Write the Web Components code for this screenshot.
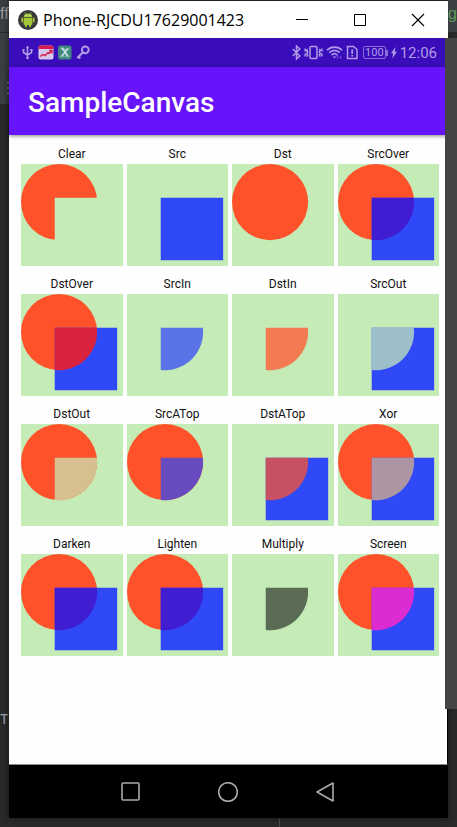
<!DOCTYPE html>
<html lang="en">
<head>
<meta charset="utf-8">
<meta name="viewport" content="width=device-width, initial-scale=1">
<title>Phone-RJCDU17629001423</title>
<style>
html, body { margin: 0; height: 100%; }
body { background: #2b2b2b; font-family: Roboto, "Liberation Sans", sans-serif; overflow: hidden; }
</style>
</head>
<body>
<desktop-view>
  <phone-window>
    <title-bar>Phone-RJCDU17629001423</title-bar>
    <status-bar time="12:06" battery="100"></status-bar>
    <app-bar>SampleCanvas</app-bar>
    <mode-grid>
      <mode-tile kind="Clear"></mode-tile>
      <mode-tile kind="Src"></mode-tile>
      <mode-tile kind="Dst"></mode-tile>
      <mode-tile kind="SrcOver"></mode-tile>
      <mode-tile kind="DstOver"></mode-tile>
      <mode-tile kind="SrcIn"></mode-tile>
      <mode-tile kind="DstIn"></mode-tile>
      <mode-tile kind="SrcOut"></mode-tile>
      <mode-tile kind="DstOut"></mode-tile>
      <mode-tile kind="SrcATop"></mode-tile>
      <mode-tile kind="DstATop"></mode-tile>
      <mode-tile kind="Xor"></mode-tile>
      <mode-tile kind="Darken"></mode-tile>
      <mode-tile kind="Lighten"></mode-tile>
      <mode-tile kind="Multiply"></mode-tile>
      <mode-tile kind="Screen"></mode-tile>
    </mode-grid>
    <nav-bar></nav-bar>
  </phone-window>
</desktop-view>
<script>
function define(name, css, html) {
  customElements.define(name, class extends HTMLElement {
    constructor() {
      super();
      this.attachShadow({ mode: 'open' });
      const body = typeof html === 'function' ? html(this) : html;
      this.shadowRoot.innerHTML = `<style>${css}</style>${body}`;
    }
  });
}

define('desktop-view', `
  :host { display: grid; grid-template-columns: 9px 1fr 9px; min-height: 100vh; box-sizing: border-box; position: relative; background: #2a2a2a; }
  .edge { display: flex; flex-direction: column; overflow: hidden; white-space: nowrap; }
  .head { height: 33px; box-sizing: border-box; padding-top: 4px; background: #3c3f41; border-bottom: 1px solid #2a2a2a; font: 16px/20px "Liberation Sans", sans-serif; }
  .tabs { height: 71px; box-sizing: border-box; padding-top: 48px; background: #3c3f41; }
  .tabs svg { display: block; margin-left: auto; }
  .gutter { flex: 1; }
  .foot { height: 116px; color: #9aa3b4; font: 14px/18px "Liberation Mono", monospace; }
  .left .head { color: #9a9da0; }
  .right .head { color: #5a9a58; display: flex; justify-content: flex-end; }
  .main { padding: 1px 0 9px; display: flex; flex-direction: column; min-width: 0; }
  .panel { position: absolute; right: 0; top: 38px; bottom: 118px; width: 12px; background: #444; }
  .divider { position: absolute; left: 279px; bottom: 0; height: 8px; width: 1px; background: #484848; }
`, `
  <div class="edge left"><div class="head">ff</div>
    <div class="tabs"><svg width="2" height="14" fill="#77797b"><path d="M0 1h2v2H0zM0 6h2v2H0zM0 11h2v2H0z"/></svg></div>
    <div class="gutter"></div><div class="foot">Te</div></div>
  <div class="main"><slot></slot></div>
  <div class="edge right"><div class="head">ng</div></div>
  <div class="panel"></div><div class="divider"></div>
`);

define('phone-window', `
  :host { display: flex; flex-direction: column; flex: 1; background: #fefefe; box-shadow: 0 0 7px #0008; }
  ::slotted(mode-grid) { flex: 1; }
`, `<slot></slot>`);

define('title-bar', `
  :host { display: flex; align-items: center; height: 37px; background: #fff; color: #000; }
  .logo { margin: 0 5px 0 9px; }
  h1 { flex: 1; margin: 0; font: 16px/20px "Open Sans", "Noto Sans", sans-serif; white-space: nowrap; min-width: 0; }
  .controls { display: flex; gap: 28px; padding-right: 15px; }
  button { border: 0; padding: 8px; background: none; display: block; }
  svg { display: block; }
`, `
  <svg class="logo" width="20" height="20" viewBox="0 0 20 20">
    <circle cx="10" cy="10" r="10" fill="#39393c"/>
    <g fill="#a4c639"><path d="M5.600 7.300a4.400 3.900 0 0 1 8.800 0z"/><rect x="5.600" y="7.900" width="8.800" height="7" rx="1"/>
    <rect x="3.400" y="7.600" width="1.700" height="5" rx=".8"/><rect x="14.900" y="7.600" width="1.700" height="5" rx=".8"/>
    <rect x="7" y="13.800" width="2" height="3.400" rx="1"/><rect x="11" y="13.800" width="2" height="3.400" rx="1"/></g>
    <path d="M6.700 2.600l1 1.600M13.300 2.600l-1 1.600" stroke="#a4c639" stroke-width=".8"/>
    <circle cx="8" cy="5.600" r=".6" fill="#fff"/><circle cx="12" cy="5.600" r=".6" fill="#fff"/>
  </svg>
  <h1><slot></slot></h1>
  <div class="controls">
    <button aria-label="Minimize"><svg width="14" height="14"><path d="M1 6.500h12" stroke="#000"/></svg></button>
    <button aria-label="Maximize"><svg width="14" height="14"><path d="M1.500 1.500h11v11h-11z" fill="none" stroke="#000"/></svg></button>
    <button aria-label="Close"><svg width="14" height="14"><path d="M1 1l12 12M13 1L1 13" stroke="#000" stroke-width="1.100"/></svg></button>
  </div>
`);

define('status-bar', `
  :host { display: flex; align-items: center; justify-content: space-between; height: 29px; padding: 0 11px 0 12px; background: #3a0dbb; color: #b19be6; }
  .group { display: flex; align-items: center; }
  .apps { gap: 4px; }
  .signals { gap: 3px; }
  svg { display: block; fill: none; stroke: currentColor; stroke-width: 1.5; }
  .battery { display: flex; align-items: center; margin-left: 2px; }
  .level { border: 1px solid #8770d2; border-radius: 2px; font-size: 11px; line-height: 11px; padding: 0 1px; }
  .battery::after { content: ""; width: 2px; height: 6px; background: #8770d2; }
  time { font-size: 15px; line-height: 20px; }
`, el => `
  <div class="group apps">
    <svg width="13" height="15" viewBox="0 0 13 15"><path d="M6.500 2v11M2.500 5v2.500l4 2.500M10.500 5v2.500l-4 2.500"/><path d="M4.800 3.200L6.500.5l1.700 2.700zM1.500 4h2v2h-2zM9.500 4h2v2h-2z" fill="currentColor" stroke="none"/><circle cx="6.500" cy="13" r="1.300" fill="currentColor" stroke="none"/></svg>
    <svg width="16" height="15" viewBox="0 0 16 15"><rect x=".5" y=".5" width="15" height="14" rx="2" fill="#d5c9ee" stroke="none"/><path d="M.5 4V2.500a2 2 0 0 1 2-2h11a2 2 0 0 1 2 2V4z" fill="#d81b50" stroke="none"/><path d="M2 11.500l3-2 2 1 3-3 1 1 3-3M11 5.500h3v3" stroke="#d8204f" stroke-width="1.500"/></svg>
    <svg width="14" height="15" viewBox="0 0 14 15"><rect x="0" y=".5" width="13.500" height="14" rx="2" fill="#41877c" stroke="none"/><path d="M2 4h10M2 11.500h10" stroke="#5da894"/><path d="M3.500 3.500h1.200l5.300 8M10 3.500l-6.500 8" stroke="#c7dce5" stroke-width="1.800"/></svg>
    <svg width="14" height="15" viewBox="0 0 14 15"><circle cx="9.300" cy="4.800" r="3.400" stroke-width="2"/><path d="M7 7.200L1.200 13M2.300 11.500l2 2" stroke-width="2"/></svg>
  </div>
  <div class="group signals">
    <svg width="9" height="15" viewBox="0 0 9 15"><path d="M.8 4l7 7L4.500 14V1l3.300 3-7 7"/></svg>
    <svg width="19" height="15" viewBox="0 0 19 15"><rect x="6" y="1.500" width="7" height="12" rx="1"/><path d="M3.700 4L2.700 5.500l1 1.500-1 1.500 1 1.500-1 1.500M15.300 4l1 1.500-1 1.500 1 1.500-1 1.500 1 1.500M1.200 3.500v3M1.200 8.500v3M17.900 3.500v3M17.900 8.500v3"/></svg>
    <svg width="17" height="15" viewBox="0 0 17 15"><path d="M1 5.200C5 1 12 1 16 5.200M3.300 7.700c3-3 7.400-3 10.400 0M5.600 10c1.700-1.500 4-1.500 5.600 0" stroke-width="1.700"/><path d="M6.800 11.500h3.400l-1.700 2zM11.500 10l1 1.500h-2zM14.500 13.500l-1-1.800h2zM11 13.500l.7-1 .7 1z" fill="currentColor" stroke="none"/></svg>
    <svg width="12" height="15" viewBox="0 0 12 15"><path d="M1.500 1.500h6l3.500 3v9H1.500z"/><path d="M6.200 4.500v4.300M6.200 10v1.600" stroke-width="1.800"/></svg>
    <div class="battery"><span class="level">${el.getAttribute('battery')}</span></div>
    <svg width="6" height="15" viewBox="0 0 6 15"><path d="M4.500 2L0 8.300h2.200L1.200 13.500 6 6.800H3.800z" fill="currentColor" stroke="none"/></svg>
    <time>${el.getAttribute('time')}</time>
  </div>
`);

define('app-bar', `
  :host { display: flex; align-items: center; height: 68px; padding: 0 19px; background: #6714fb; color: #fff; box-shadow: 0 1px 4px #0007; }
  h2 { margin: 0; padding-top: 4px; font-size: 28px; line-height: 36px; font-weight: 500; }
`, `<h2><slot></slot></h2>`);

define('mode-grid', `
  :host { display: grid; grid-template-columns: repeat(4, minmax(0, 1fr)); grid-auto-rows: minmax(126px, auto); align-content: start; gap: 4px; padding: 9px 8px 8px 12px; border-bottom: 1px solid #888; border-right: 1px solid #000; }
`, `<slot></slot>`);

// Each mode: circle shown, square shown, colour of the shared area.
const MODES = {
  Clear: [1, 0, '#c5ebb7'], Src: [0, 1, '#3049f8'], Dst: [1, 0, '#ff522b'], SrcOver: [1, 1, '#411dd1'],
  DstOver: [1, 1, '#da233e'], SrcIn: [0, 0, '#5974e6'], DstIn: [0, 0, '#f27b52'], SrcOut: [0, 1, '#9dbfc9'],
  DstOut: [1, 0, '#d6c090'], SrcATop: [1, 0, '#694bc0'], DstATop: [0, 1, '#c85063'], Xor: [1, 1, '#ad96a3'],
  Darken: [1, 1, '#411dd1'], Lighten: [1, 1, '#411dd1'], Multiply: [0, 0, '#5a6c53'], Screen: [1, 1, '#db2bd1']
};
define('mode-tile', `
  :host { display: block; }
  figure { margin: 0; padding-bottom: 4px; }
  figcaption { font-size: 12px; line-height: 20px; text-align: center; color: #111; }
  svg { display: block; width: 100%; background: #c5ebb7; }
`, el => {
  const kind = el.getAttribute('kind');
  const [circle, square, overlap] = MODES[kind];
  return `<figure><figcaption>${kind}</figcaption><svg viewBox="0 0 304 304" aria-hidden="true">
    ${circle ? '<circle cx="114" cy="114" r="114" fill="#ff522b"/>' : ''}
    ${square ? '<path d="M101 101h187v187H101z" fill="#3049f8"/>' : ''}
    <path d="${kind === 'Clear' ? 'M101 101h187v187H101z' : kind === 'Src' || kind === 'Dst' ? '' : 'M101 101H227.260A114 114 0 0 1 101 227.260Z'}" fill="${overlap}"/>
  </svg></figure>`;
});

define('nav-bar', `
  :host { display: flex; align-items: center; justify-content: center; gap: 61px; height: 53px; padding-right: 2px; background: #000; }
  button { border: 0; padding: 8px; background: none; display: block; }
  svg { display: block; fill: none; stroke: #aaa; stroke-width: 1.6; stroke-linejoin: round; }
`, `
  <button aria-label="Recent apps"><svg width="20" height="20"><rect x="1" y="1" width="17" height="17" rx="1"/></svg></button>
  <button aria-label="Home"><svg width="20" height="20"><circle cx="10" cy="10" r="9.300"/></svg></button>
  <button aria-label="Back"><svg width="20" height="20"><path d="M18 1v18L2 10z"/></svg></button>
`);
</script>
</body>
</html>
